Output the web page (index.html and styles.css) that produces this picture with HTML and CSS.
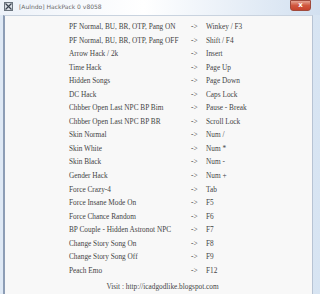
FILE: index.html
```html
<!DOCTYPE html>
<html>
<head>
<meta charset="utf-8">
<link rel="stylesheet" href="styles.css">
</head>
<body>
<div class="window">
  <div class="titlebar">
    <svg class="appicon" width="9" height="9" viewBox="0 0 9 9">
      <rect x="0.5" y="0.5" width="8" height="8" fill="#d8dde4" stroke="#6a737d"/>
      <path d="M1.5 1.5 L7.5 7.5 M7.5 1.5 L1.5 7.5" stroke="#3b4450" stroke-width="1.2"/>
    </svg>
    <span class="title">[Aulndo] HackPack 0 v8058</span>
    <div class="close"><span>x</span></div>
  </div>
  <div class="client">
    <div class="list">
      <span>PF Normal, BU, BR, OTP, Pang ON</span><span>-&gt;</span><span>Winkey / F3</span>
      <span>PF Normal, BU, BR, OTP, Pang OFF</span><span>-&gt;</span><span>Shift / F4</span>
      <span>Arrow Hack / 2k</span><span>-&gt;</span><span>Insert</span>
      <span>Time Hack</span><span>-&gt;</span><span>Page Up</span>
      <span>Hidden Songs</span><span>-&gt;</span><span>Page Down</span>
      <span>DC Hack</span><span>-&gt;</span><span>Caps Lock</span>
      <span>Chbber Open Last NPC BP Bim</span><span>-&gt;</span><span>Pause - Break</span>
      <span>Chbber Open Last NPC BP BR</span><span>-&gt;</span><span>Scroll Lock</span>
      <span>Skin Normal</span><span>-&gt;</span><span>Num /</span>
      <span>Skin White</span><span>-&gt;</span><span>Num *</span>
      <span>Skin Black</span><span>-&gt;</span><span>Num -</span>
      <span>Gender Hack</span><span>-&gt;</span><span>Num +</span>
      <span>Force Crazy-4</span><span>-&gt;</span><span>Tab</span>
      <span>Force Insane Mode On</span><span>-&gt;</span><span>F5</span>
      <span>Force Chance Random</span><span>-&gt;</span><span>F6</span>
      <span>BP Couple - Hidden Astronot NPC</span><span>-&gt;</span><span>F7</span>
      <span>Change Story Song On</span><span>-&gt;</span><span>F8</span>
      <span>Change Story Song Off</span><span>-&gt;</span><span>F9</span>
      <span>Peach Emo</span><span>-&gt;</span><span>F12</span>
    </div>
    <div class="visit">Visit : http://icadgodlike.blogspot.com</div>
  </div>
</div>
</body>
</html>
```
FILE: styles.css
```css
html, body {
  margin: 0;
  padding: 0;
  background: #ffffff;
}
.window {
  width: 320px;
  height: 294px;
  overflow: hidden;
  background: linear-gradient(90deg, #dfe9f5 0%, #e9f0f8 60%, #d7e4f2 100%);
  display: flex;
  flex-direction: column;
}
.titlebar {
  height: 15px;
  flex: none;
  display: flex;
  align-items: center;
  padding-left: 4px;
  background: linear-gradient(90deg, #edf2f9 0%, #ffffff 45%, #d2e0f0 100%);
}
.appicon {
  flex: none;
  margin-top: -3px;
}
.title {
  font-family: "DejaVu Sans", sans-serif;
  font-size: 6px;
  color: #6b6b6b;
  margin-left: 6px;
  margin-top: -3px;
  flex: 1;
}
.close {
  width: 19px;
  height: 9px;
  margin-right: 9px;
  margin-top: -4px;
  background: linear-gradient(180deg, #e6a493 0%, #d0573f 50%, #c8432c 100%);
  border: 1px solid #a04a3c;
  border-radius: 0 0 3px 3px;
  display: flex;
  align-items: center;
  justify-content: center;
}
.close span {
  font-family: "DejaVu Sans", sans-serif;
  font-size: 7px;
  font-weight: bold;
  color: #ffffff;
  line-height: 1;
}
.client {
  flex: 1;
  margin-left: 3px;
  margin-right: 7px;
  background: #f8f8f8;
  border-left: 2px solid #8d9db5;
  border-right: 1px solid #b7c3d3;
  border-top: 1px solid #c9d3df;
  padding-top: 4px;
}
.list {
  display: grid;
  grid-template-columns: 122px 15px auto;
  grid-auto-rows: 13.55px;
  margin-left: 64px;
  font-family: "Liberation Serif", serif;
  font-size: 7.3px;
  line-height: 13.55px;
  color: #444444;
  white-space: nowrap;
}
.visit {
  font-family: "Liberation Serif", serif;
  font-size: 7.3px;
  line-height: 13px;
  color: #444444;
  text-align: center;
  margin-top: 3px;
  padding-left: 8px;
  white-space: nowrap;
}
```
